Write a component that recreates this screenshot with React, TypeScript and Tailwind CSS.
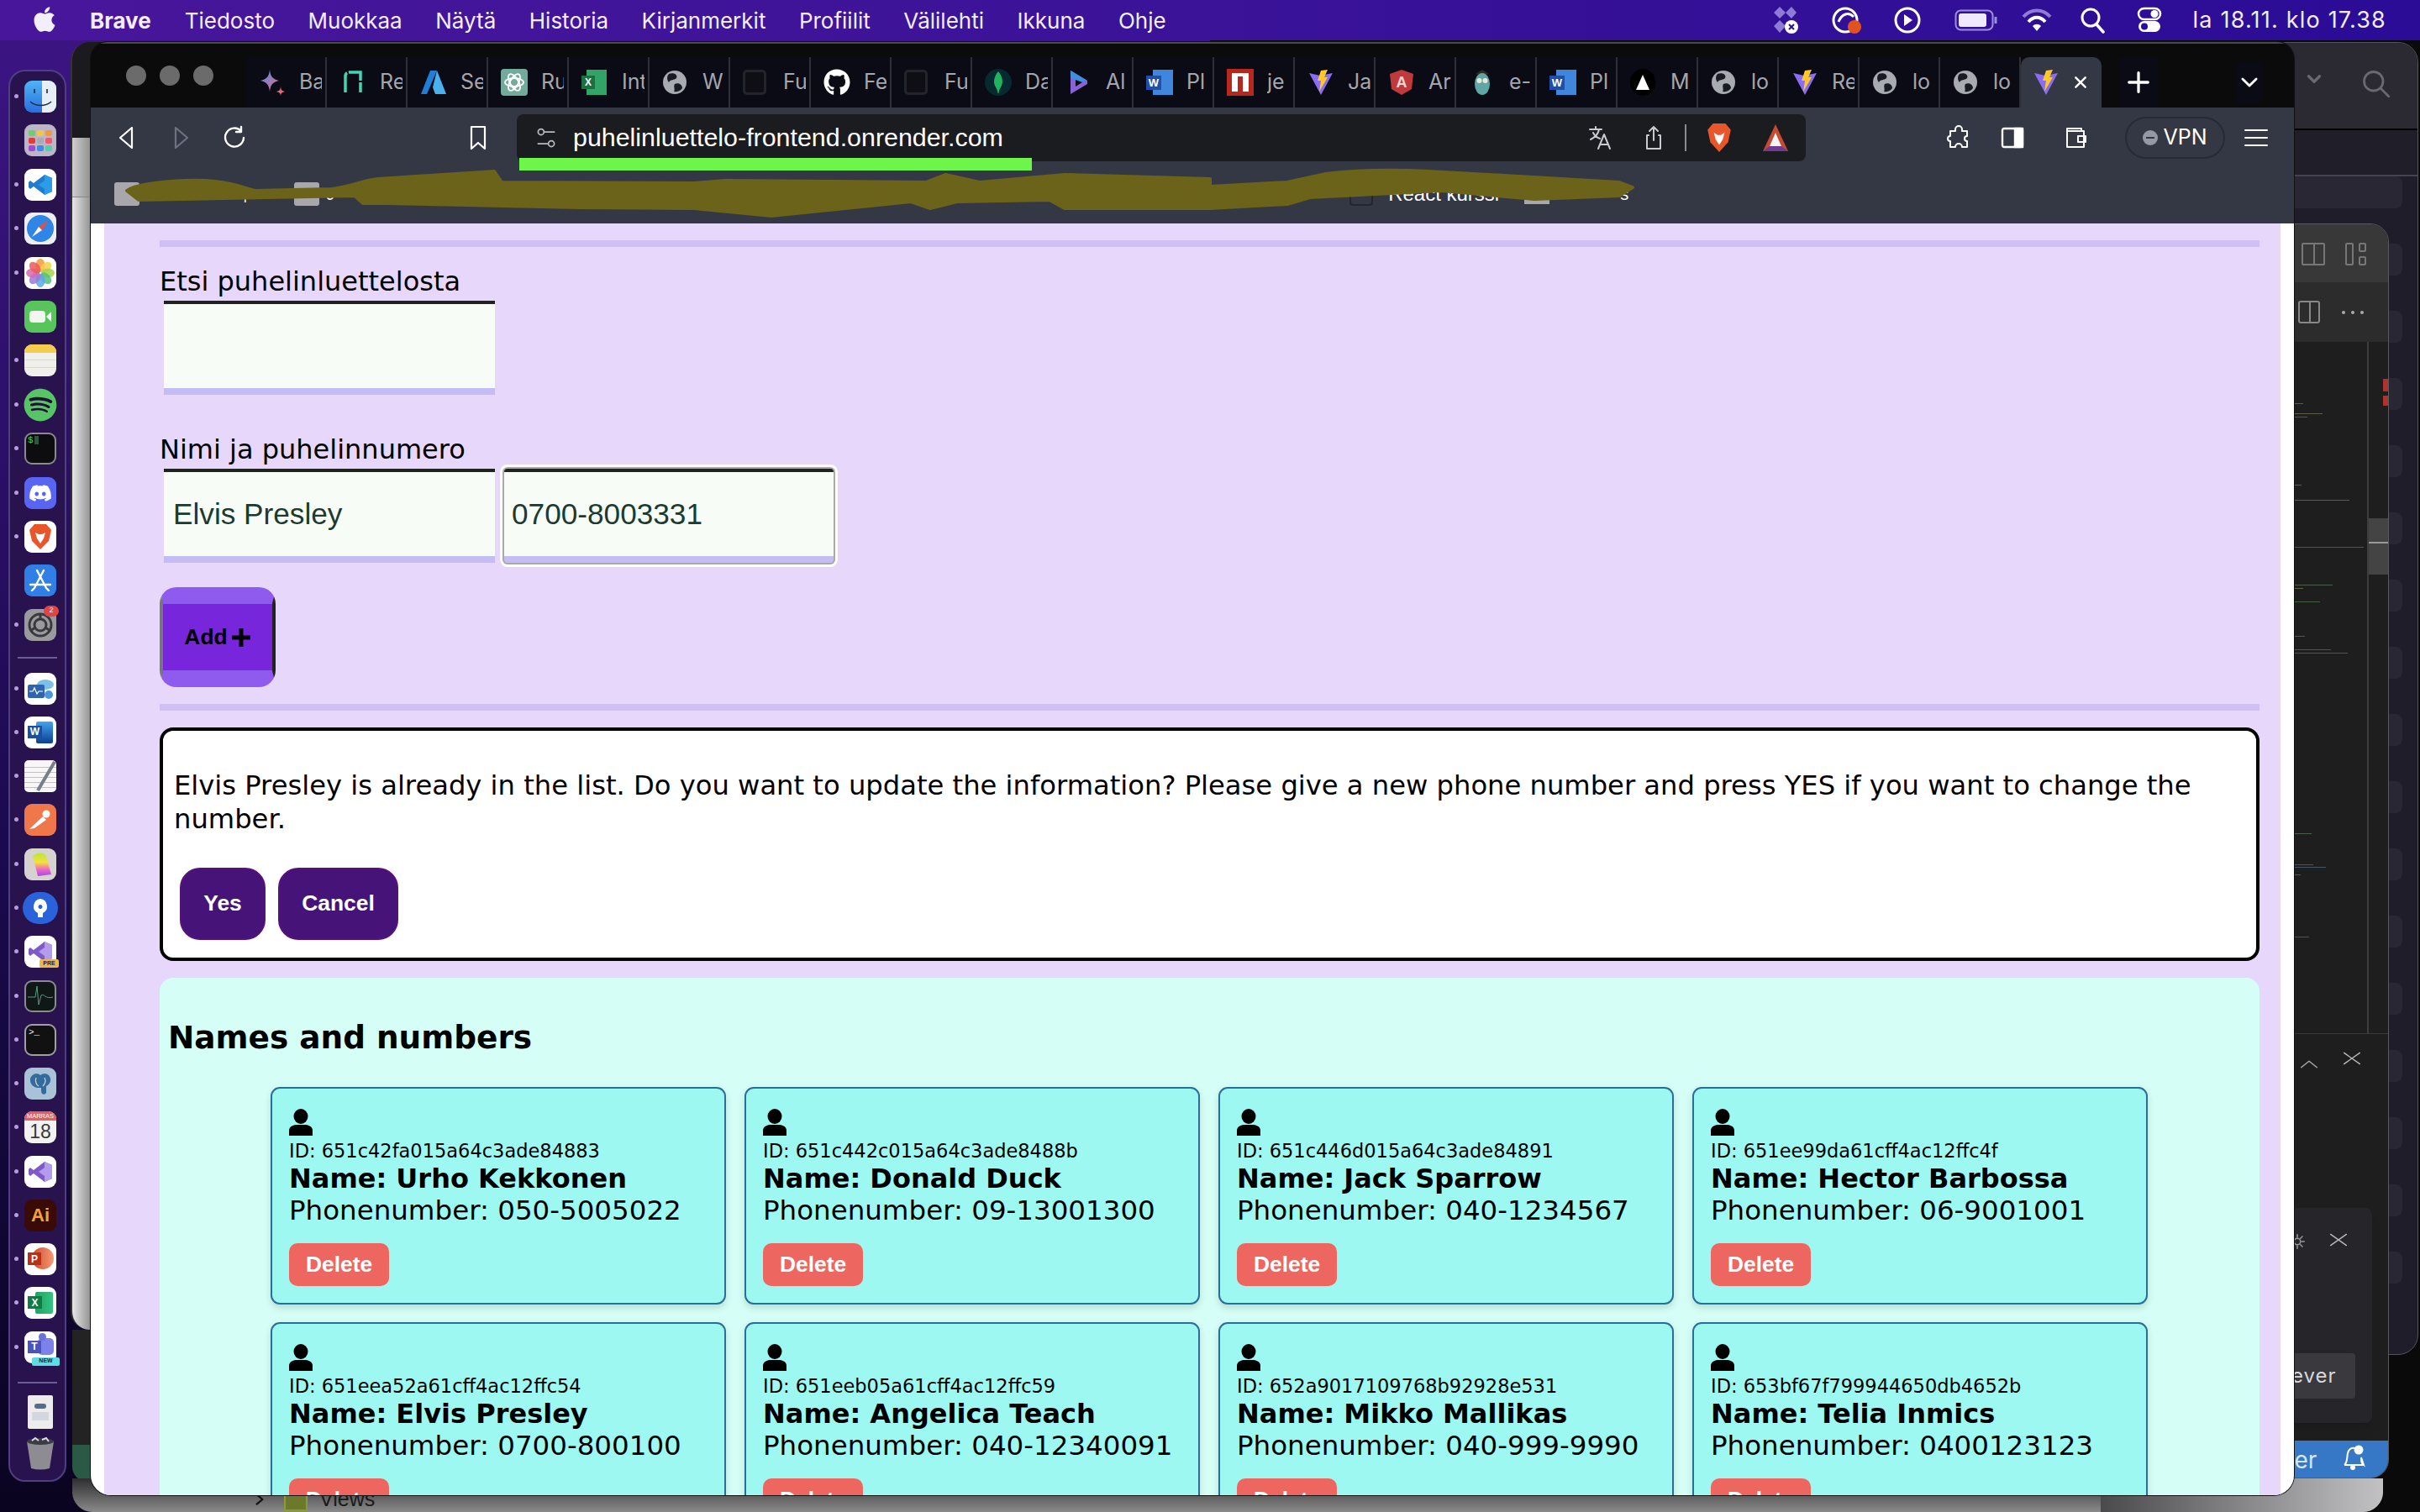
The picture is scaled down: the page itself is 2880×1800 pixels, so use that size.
import React from "react";
import { FaApple, FaGithub, FaDiscord, FaSpotify } from "react-icons/fa";

const VS = "font-['DejaVu_Sans',sans-serif]";
const AR = "font-['Liberation_Sans',Arial,sans-serif]";

function Vite({ s = 32 }: { s?: number }) {
  return (
    <svg width={s} height={s} viewBox="0 0 32 32">
      <path d="M2 5 L15 8 L30 5 L16 31 Z" fill="#8a6cf5" />
      <path d="M16 2 L24 1 L20 10 L24 10 L14 27 L16 14 L12 14 Z" fill="#ffc928" />
    </svg>
  );
}

function Globe({ s = 30 }: { s?: number }) {
  return (
    <svg width={s} height={s} viewBox="0 0 30 30">
      <circle cx="15" cy="15" r="14" fill="#a9abb2" />
      <path d="M8 5 C14 3 19 6 17 10 C14 13 10 11 8 15 C6 13 5 8 8 5 Z M15 17 C20 15 24 18 24 22 C21 26 17 27 14 26 C16 23 13 20 15 17 Z" fill="#1a1a22" />
    </svg>
  );
}

function TabIcon({ k }: { k: string }) {
  switch (k) {
    case "gem":
      return (
        <svg width="32" height="32" viewBox="0 0 32 32">
          <defs>
            <linearGradient id="g1" x1="0" y1="0" x2="1" y2="1">
              <stop offset="0" stopColor="#4c8df6" />
              <stop offset="1" stopColor="#e8697a" />
            </linearGradient>
          </defs>
          <path d="M13 1 C14 9 16 12 24 14 C16 16 14 19 13 27 C12 19 10 16 2 14 C10 12 12 9 13 1 Z" fill="url(#g1)" />
          <path d="M26 21 C26.5 25 27 26 31 27 C27 28 26.5 29 26 32 C25.5 29 25 28 21 27 C25 26 25.5 25 26 21 Z" fill="#e8697a" />
        </svg>
      );
    case "re":
      return (
        <svg width="32" height="32" viewBox="0 0 32 32">
          <path d="M7 28 V9 Q7 4 12 4 H25 V28" fill="none" stroke="#43d6b5" strokeWidth="3.5" strokeDasharray="24 2" />
        </svg>
      );
    case "az":
      return (
        <svg width="32" height="32" viewBox="0 0 32 32">
          <path d="M12 2 H20 L8 30 H1 Z" fill="#1f7fd6" />
          <path d="M20 2 L31 30 H18 L15 22 Z" fill="#49b2ee" />
        </svg>
      );
    case "gpt":
      return (
        <div className="w-[32px] h-[32px] rounded-[4px] bg-[#74aa9c] flex items-center justify-center">
          <svg width="26" height="26" viewBox="0 0 26 26" fill="none" stroke="#fff" strokeWidth="1.8">
            <circle cx="13" cy="13" r="5" />
            <ellipse cx="13" cy="13" rx="11" ry="5" />
            <ellipse cx="13" cy="13" rx="11" ry="5" transform="rotate(60 13 13)" />
            <ellipse cx="13" cy="13" rx="11" ry="5" transform="rotate(120 13 13)" />
          </svg>
        </div>
      );
    case "xl":
      return (
        <div className="relative w-[30px] h-[30px]">
          <div className="absolute right-0 top-0 w-[24px] h-[30px] bg-[#33a468]" />
          <div className={`absolute left-0 top-[7px] w-[16px] h-[16px] bg-[#1d6f42] text-white text-[12px] font-bold flex items-center justify-center ${AR}`}>X</div>
        </div>
      );
    case "gl":
      return <Globe />;
    case "dk":
      return <div className="w-[28px] h-[30px] rounded-[5px] border-[3px] border-[#24252a] bg-[#0e0e14]" />;
    case "gh":
      return <FaGithub size={32} color="#fff" />;
    case "mg":
      return (
        <div className="w-[32px] h-[32px] rounded-full bg-[#062a30] flex items-center justify-center">
          <svg width="14" height="28" viewBox="0 0 14 28">
            <path d="M7 1 C12 7 13 13 11 18 C10 20 8 22 7.5 27 H6.5 C6 22 4 20 3 18 C1 13 2 7 7 1 Z" fill="#22b45c" />
          </svg>
        </div>
      );
    case "al":
      return (
        <svg width="32" height="32" viewBox="0 0 32 32">
          <path d="M6 2 L26 14 L26 18 L6 30 Z" fill="#8a62d8" />
          <path d="M6 2 L26 14 L14 16 L6 10 Z" fill="#3f8fe0" />
          <path d="M12 13 L20 16 L12 21 Z" fill="#0b0c18" />
        </svg>
      );
    case "wd":
      return (
        <div className="relative w-[32px] h-[30px]">
          <div className="absolute right-0 top-0 w-[24px] h-[30px] bg-[#3f86dc]" />
          <div className={`absolute left-0 top-[7px] w-[18px] h-[17px] bg-[#1f4fa8] text-white text-[13px] font-bold flex items-center justify-center ${AR}`}>W</div>
        </div>
      );
    case "np":
      return (
        <div className="w-[32px] h-[32px] bg-[#b5271f] flex items-center justify-center">
          <div className="w-[20px] h-[22px] bg-white relative">
            <div className="absolute left-[7px] top-[4px] w-[6px] h-[18px] bg-[#b5271f]" />
          </div>
        </div>
      );
    case "vt":
      return <Vite />;
    case "ng":
      return (
        <svg width="32" height="32" viewBox="0 0 32 32">
          <path d="M16 1 L30 6 L28 24 L16 31 L4 24 L2 6 Z" fill="#c0393b" />
          <text x="16" y="22" textAnchor="middle" fontSize="18" fontFamily="Liberation Sans" fill="#f3d6d6" fontWeight="700">A</text>
        </svg>
      );
    case "ow":
      return (
        <svg width="32" height="32" viewBox="0 0 32 32">
          <path d="M8 6 L16 1 L24 6 L16 8 Z" fill="#332a22" />
          <ellipse cx="16" cy="18" rx="9" ry="13" fill="#5fa7a6" />
          <circle cx="12.5" cy="14" r="3" fill="#e8e8d8" />
          <circle cx="19.5" cy="14" r="3" fill="#e8e8d8" />
        </svg>
      );
    case "tr":
      return (
        <div className="w-[30px] h-[32px] rounded-full bg-black flex items-center justify-center">
          <svg width="18" height="20" viewBox="0 0 18 20"><path d="M9 1 L17 19 H1 Z" fill="#fff" /></svg>
        </div>
      );
    default:
      return null;
  }
}

const TABS: [string, string][] = [
  ["gem", "Ba"], ["re", "Re"], ["az", "Se"], ["gpt", "Ru"], ["xl", "Int"], ["gl", "W"],
  ["dk", "Fu"], ["gh", "Fe"], ["dk", "Fu"], ["mg", "Da"], ["al", "Al"], ["wd", "Pl"],
  ["np", "je"], ["vt", "Ja"], ["ng", "Ar"], ["ow", "e-"], ["wd", "Pl"], ["tr", "M"],
  ["gl", "lo"], ["vt", "Re"], ["gl", "lo"], ["gl", "lo"],
];

function Line({ d, w = 2.5, s = 32, c = "#fff" }: { d: string; w?: number; s?: number; c?: string }) {
  return (
    <svg width={s} height={s} viewBox="0 0 32 32" fill="none" stroke={c} strokeWidth={w} strokeLinecap="round" strokeLinejoin="round">
      <path d={d} />
    </svg>
  );
}

function Menubar() {
  const items = ["Tiedosto", "Muokkaa", "Näytä", "Historia", "Kirjanmerkit", "Profiilit", "Välilehti", "Ikkuna", "Ohje"];
  return (
    <div className="h-[48px] relative z-40 flex items-center pl-[36px] pr-[40px] bg-gradient-to-r from-[#48169a] to-[#2b0c96] text-[#f2eefc] font-['Inter',sans-serif] text-[26px]">
      <FaApple size={34} color="#f2eefc" className="mr-[37px] -mt-[3px]" />
      <span className="font-bold mr-[40px]">Brave</span>
      <div className="flex gap-[39.5px]">{items.map((m) => <span key={m}>{m}</span>)}</div>
      <div className="ml-auto flex items-center">
        <svg width="42" height="36" viewBox="0 0 42 36" className="mr-[32px]">
          <path d="M14 2 l7 7 l-7 7 l-7 -7 Z M28 2 l6 7 l-6 7 l-7 -7 Z M14 18 l7 7 l-7 8 l-7 -8 Z" fill="#8f7ad6" />
          <circle cx="28" cy="26" r="8" fill="#fff" />
          <path d="M25 23 l6 6 M31 23 l-6 6" stroke="#2b0c96" strokeWidth="2" />
        </svg>
        <svg width="42" height="36" viewBox="0 0 42 36" className="mr-[32px]">
          <circle cx="18" cy="18" r="14" fill="none" stroke="#fff" strokeWidth="3" />
          <path d="M10 20 C14 10 22 8 28 14" fill="none" stroke="#fff" strokeWidth="3" />
          <circle cx="29" cy="26" r="8" fill="#e2521f" />
        </svg>
        <svg width="36" height="36" viewBox="0 0 36 36" className="mr-[38px]">
          <circle cx="18" cy="18" r="14" fill="none" stroke="#fff" strokeWidth="3" />
          <path d="M14 11 L24 18 L14 25 Z" fill="#fff" />
        </svg>
        <svg width="52" height="26" viewBox="0 0 52 26" className="mr-[28px]">
          <rect x="1.5" y="1.5" width="44" height="23" rx="6" fill="none" stroke="#9b8fd8" strokeWidth="2" />
          <rect x="5" y="5" width="33" height="16" rx="3" fill="#eee9fb" />
          <path d="M49 9 v8" stroke="#9b8fd8" strokeWidth="3" />
        </svg>
        <svg width="36" height="30" viewBox="0 0 36 30" className="mr-[34px]">
          <path d="M2 11 C11 1 25 1 34 11" fill="none" stroke="#8f7ad6" strokeWidth="4" />
          <path d="M8 17 C14 10 22 10 28 17" fill="none" stroke="#fff" strokeWidth="4" />
          <path d="M13 22 C16 19 20 19 23 22 L18 28 Z" fill="#fff" />
        </svg>
        <svg width="30" height="32" viewBox="0 0 30 32" className="mr-[36px]">
          <circle cx="12" cy="13" r="10" fill="none" stroke="#fff" strokeWidth="3" />
          <path d="M19 21 L27 30" stroke="#fff" strokeWidth="3.5" strokeLinecap="round" />
        </svg>
        <svg width="32" height="32" viewBox="0 0 32 32" className="mr-[36px]">
          <rect x="3" y="2" width="26" height="13" rx="6.5" fill="none" stroke="#fff" strokeWidth="2.5" />
          <circle cx="22" cy="8.5" r="4.5" fill="#fff" />
          <rect x="3" y="17" width="26" height="13" rx="6.5" fill="#fff" />
          <circle cx="10" cy="23.5" r="4" fill="#2b0c96" />
        </svg>
        <span className="text-[27px] tracking-[1.2px] whitespace-nowrap">la 18.11. klo 17.38</span>
      </div>
    </div>
  );
}

function Box({ c, children, cls = "" }: { c: string; children?: React.ReactNode; cls?: string }) {
  return (
    <div className={`w-[38px] h-[38px] rounded-[9px] flex items-center justify-center overflow-hidden relative ${cls}`} style={{ background: c }}>
      {children}
    </div>
  );
}

function VSShape({ a = "#7f5ac7", b = "#b49cec" }: { a?: string; b?: string }) {
  return (
    <svg width="30" height="26" viewBox="0 0 30 26">
      <path d="M20 1 L29 5 V21 L20 25 L7 15 L3 18 L1 16 V10 L3 8 L7 11 Z" fill={a} />
      <path d="M20 1 L29 5 V21 L20 25 Z M20 8 L13 13 L20 18 Z" fill={b} fillRule="evenodd" />
    </svg>
  );
}

function DockIcon({ k }: { k: string }) {
  switch (k) {
    case "finder":
      return (
        <div className="w-[38px] h-[38px] rounded-[9px] overflow-hidden relative bg-gradient-to-b from-[#4fb4f5] to-[#2a6fdc]">
          <div className="absolute right-0 top-0 w-[17px] h-full bg-[#e8eef5]" />
          <svg className="absolute inset-0" width="38" height="38" viewBox="0 0 38 38" fill="none" stroke="#14284a" strokeWidth="1.6">
            <path d="M12 10 v5 M27 10 v5 M7 25 C14 31 25 31 32 25" />
          </svg>
        </div>
      );
    case "launch":
      return (
        <Box c="#bdb5c8">
          <div className="grid grid-cols-3 gap-[2px]">
            {["#6bd06a", "#f6c544", "#f09a3a", "#e33a3a", "#a9a9b4", "#ef5a6a", "#a24ad8", "#3a8cf0", "#4ed0a8"].map((c, i) => (
              <div key={i} className="w-[8px] h-[7px] rounded-[2px]" style={{ background: c }} />
            ))}
          </div>
        </Box>
      );
    case "vscode":
      return <Box c="#fff"><VSShape a="#1f7ccf" b="#2a9de8" /></Box>;
    case "safari":
      return (
        <Box c="#eceef2">
          <svg width="34" height="34" viewBox="0 0 34 34">
            <circle cx="17" cy="17" r="16" fill="#2f86e6" />
            <path d="M27 7 L19 19 L15 15 Z" fill="#f04a3a" />
            <path d="M7 27 L15 15 L19 19 Z" fill="#fff" />
          </svg>
        </Box>
      );
    case "photos":
      return (
        <Box c="#fff">
          <svg width="34" height="34" viewBox="0 0 34 34">
            {["#f29a38", "#f6d14a", "#a6d24e", "#57bf7c", "#5aa8e4", "#9a7ad8", "#d668b4", "#ec5a58"].map((c, i) => (
              <ellipse key={i} cx="17" cy="8" rx="5.5" ry="8" fill={c} opacity=".85" transform={`rotate(${i * 45} 17 17)`} />
            ))}
          </svg>
        </Box>
      );
    case "facetime":
      return (
        <Box c="#58c45c">
          <div className="w-[19px] h-[14px] rounded-[4px] bg-[#f2f5f0]" />
          <svg width="8" height="12" viewBox="0 0 8 12"><path d="M7 0 V12 L1 6 Z" fill="#f2f5f0" /></svg>
        </Box>
      );
    case "notes":
      return (
        <div className="w-[38px] h-[38px] rounded-[9px] overflow-hidden bg-[#f0efea] flex flex-col">
          <div className="h-[10px] bg-[#f6cc4c]" />
          <div className="mt-[8px] border-t border-[#d8d8d4] h-[9px]" />
          <div className="border-t border-[#d8d8d4] h-[9px]" />
        </div>
      );
    case "spotify":
      return <div className="w-[40px] h-[38px] rounded-full bg-[#1f1032] flex items-center justify-center"><FaSpotify size={40} color="#58c468" /></div>;
    case "term1":
      return (
        <div className="w-[38px] h-[38px] rounded-[9px] border-2 border-[#8a8a90] bg-[#0d0d10] text-[#4ad06a] text-[11px] leading-none p-[2px] font-['Liberation_Mono',monospace] flex items-start">$<span className="inline-block w-[5px] h-[10px] bg-[#2a5a3a] ml-[1px]" /></div>
      );
    case "discord":
      return <Box c="#5865f2"><FaDiscord size={28} color="#fff" /></Box>;
    case "brave":
      return (
        <Box c="#fff">
          <svg width="30" height="34" viewBox="0 0 30 34">
            <path d="M8 2 H22 L28 9 L25 22 L15 32 L5 22 L2 9 Z" fill="#e8562a" />
            <path d="M9 12 L13 14 H17 L21 12 L19 19 L15 25 L11 19 Z" fill="#fff" />
          </svg>
        </Box>
      );
    case "appstore":
      return (
        <Box c="#2f7fe6">
          <svg width="30" height="30" viewBox="0 0 30 30" stroke="#fff" strokeWidth="2.4" strokeLinecap="round" fill="none">
            <path d="M19 3 L8 24 M11 3 L22 24 M3 20 H27 M5 27 L8 24 M25 27 L22 24" />
          </svg>
        </Box>
      );
    case "settings":
      return (
        <div className="relative">
          <Box c="#9a9a9e">
            <svg width="30" height="30" viewBox="0 0 30 30" fill="none" stroke="#3a3a3e">
              <circle cx="15" cy="15" r="13" strokeWidth="3" />
              <circle cx="15" cy="15" r="7" strokeWidth="3" />
              <path d="M15 8 V1 M9 18 L3 22 M21 18 L27 22" strokeWidth="3" />
            </svg>
          </Box>
          <div className={`absolute -right-[3px] -top-[4px] w-[18px] h-[13px] rounded-full bg-[#e04444] text-white text-[9px] flex items-center justify-center ${AR}`}>2</div>
        </div>
      );
    case "azdata":
      return (
        <Box c="#fff">
          <svg width="34" height="30" viewBox="0 0 34 30">
            <ellipse cx="23" cy="10" rx="10" ry="6" fill="#7cc0ea" />
            <rect x="2" y="10" width="20" height="16" rx="2" fill="#2f65b0" />
            <path d="M4 18 h4 l2 -4 l3 7 l2 -3 h5" stroke="#fff" strokeWidth="1.2" fill="none" />
            <circle cx="27" cy="22" r="5" fill="#4a98d8" />
          </svg>
        </Box>
      );
    case "word":
      return (
        <Box c="#fff">
          <div className="absolute right-[4px] top-[6px] w-[20px] h-[26px] rounded-[2px] bg-gradient-to-b from-[#41a5ee] to-[#103f91]" />
          <div className={`absolute left-[4px] top-[11px] w-[17px] h-[15px] bg-[#1a4fa5] text-white text-[12px] font-bold flex items-center justify-center ${AR}`}>W</div>
        </Box>
      );
    case "textedit":
      return (
        <div className="w-[38px] h-[38px] rounded-[5px] bg-[#f8f6f6] relative overflow-hidden">
          {[8, 14, 20, 26, 32].map((y) => <div key={y} className="absolute left-0 right-0 h-px bg-[#e4b4b4]" style={{ top: y }} />)}
          <svg className="absolute inset-0" width="38" height="38" viewBox="0 0 38 38"><path d="M36 2 L16 36" stroke="#77808a" strokeWidth="4" /></svg>
        </div>
      );
    case "postman":
      return (
        <Box c="#f0774a">
          <svg width="30" height="26" viewBox="0 0 30 26" fill="#fff">
            <circle cx="22" cy="6" r="4.5" />
            <path d="M2 24 L18 9 L22 13 L8 23 Z" />
          </svg>
        </Box>
      );
    case "paint":
      return (
        <Box c="#d6d2d0">
          <svg width="30" height="32" viewBox="0 0 30 32">
            <defs>
              <linearGradient id="pp" x1="0" y1="0" x2="0" y2="1">
                <stop offset="0" stopColor="#b6e63c" />
                <stop offset=".4" stopColor="#f6e03c" />
                <stop offset=".7" stopColor="#f06ac0" />
                <stop offset="1" stopColor="#a04ae8" />
              </linearGradient>
            </defs>
            <path d="M6 6 C12 1 20 2 22 6 L28 28 L12 30 Z" fill="url(#pp)" />
          </svg>
        </Box>
      );
    case "source":
      return (
        <div className="w-[42px] h-[38px] rounded-full bg-[#2a62dc] flex items-center justify-center">
          <svg width="20" height="24" viewBox="0 0 20 24"><path d="M10 1 A9 9 0 0 1 13 18 V23 H7 V18 A9 9 0 0 1 10 1 Z M10 8 a2.5 2.5 0 1 0 .01 0" fill="#fff" fillRule="evenodd" /></svg>
        </div>
      );
    case "vspre":
      return (
        <div className="relative">
          <Box c="#fff"><VSShape /></Box>
          <div className={`absolute -right-[3px] bottom-0 w-[23px] h-[10px] rounded-[2px] bg-[#eab94a] text-[#2a1a3a] text-[7px] font-bold flex items-center justify-center ${AR}`}>PRE</div>
        </div>
      );
    case "activity":
      return (
        <div className="w-[38px] h-[38px] rounded-[9px] border-2 border-[#8a8a90] bg-[#0f1816] flex items-center justify-center">
          <svg width="32" height="28" viewBox="0 0 32 28" fill="none" stroke="#5f9a80" strokeWidth="1"><path d="M1 15 H10 L12 2 L14 24 L17 13 C20 10 22 18 31 15" /></svg>
        </div>
      );
    case "term2":
      return (
        <div className="w-[38px] h-[38px] rounded-[9px] border-2 border-[#a0a0a4] bg-[#111] text-[#e8e8e8] text-[11px] leading-none p-[3px] font-['Liberation_Mono',monospace]">&gt;_</div>
      );
    case "pg":
      return (
        <Box c="#a9c2d8">
          <svg width="30" height="30" viewBox="0 0 30 30">
            <path d="M3 9 C5 3 12 2 15 5 C19 2 26 3 27 9 C28 14 24 17 22 18 V26 C20 29 16 28 16 24 V20 H12 C8 20 2 16 3 9 Z" fill="#346a9c" />
            <path d="M10 8 C8 13 11 17 13 18 M20 8 C22 12 20 16 18 18" stroke="#c8dae8" strokeWidth="1.2" fill="none" />
          </svg>
        </Box>
      );
    case "cal":
      return (
        <div className={`w-[38px] h-[38px] rounded-[9px] overflow-hidden bg-[#f4f2f0] flex flex-col items-center ${AR}`}>
          <div className="w-full h-[11px] bg-[#e06060] text-white text-[7.5px] leading-[11px] text-center">MARRAS</div>
          <div className="text-[23px] leading-[27px] text-[#3a3a3a]">18</div>
        </div>
      );
    case "vs":
      return <Box c="#fff"><VSShape /></Box>;
    case "ai":
      return <Box c="#3a0a06"><span className={`text-[#f6a23a] font-bold text-[22px] ${AR}`}>Ai</span></Box>;
    case "ppt":
      return (
        <Box c="#fff">
          <div className="absolute right-[3px] top-[5px] w-[26px] h-[26px] rounded-full bg-gradient-to-r from-[#d0452a] to-[#f39a74]" />
          <div className={`absolute left-[4px] top-[11px] w-[16px] h-[15px] bg-[#b7301a] text-white text-[12px] font-bold flex items-center justify-center ${AR}`}>P</div>
        </Box>
      );
    case "excel":
      return (
        <Box c="#fff">
          <div className="absolute right-[4px] top-[6px] w-[21px] h-[26px] rounded-[2px] bg-gradient-to-r from-[#21a366] to-[#33c481]" />
          <div className={`absolute left-[4px] top-[11px] w-[17px] h-[15px] bg-[#107c41] text-white text-[12px] font-bold flex items-center justify-center ${AR}`}>X</div>
        </Box>
      );
    case "teams":
      return (
        <div className="relative">
          <Box c="#fff">
            <div className="absolute right-[3px] top-[8px] w-[19px] h-[20px] rounded-[5px] bg-[#7b83eb]" />
            <div className="absolute right-[12px] top-[2px] w-[9px] h-[9px] rounded-full bg-[#6a72d8]" />
            <div className={`absolute left-[4px] top-[11px] w-[16px] h-[15px] bg-[#4b53bc] text-white text-[12px] font-bold flex items-center justify-center ${AR}`}>T</div>
          </Box>
          <div className={`absolute -right-[4px] -bottom-[3px] w-[33px] h-[10px] rounded-[2px] bg-[#5fdce4] text-[#26263a] text-[7px] font-bold flex items-center justify-center ${AR}`}>NEW</div>
        </div>
      );
    default:
      return null;
  }
}

function Dock() {
  const first: [string, boolean][] = [
    ["finder", true], ["launch", false], ["vscode", true], ["safari", true], ["photos", true], ["facetime", false],
    ["notes", true], ["spotify", true], ["term1", true], ["discord", true], ["brave", true], ["appstore", false], ["settings", true],
  ];
  const second = ["azdata", "word", "textedit", "postman", "paint", "source", "vspre", "activity", "term2", "pg", "cal", "vs", "ai", "ppt", "excel", "teams"];
  const Item = ({ k, dot }: { k: string; dot: boolean }) => (
    <div className="relative h-[38px] w-full flex justify-center pl-[7px]">
      {dot && <div className="absolute left-[5px] top-[16px] w-[5px] h-[5px] rounded-full bg-[#b79be0]" />}
      <DockIcon k={k} />
    </div>
  );
  return (
    <div className="absolute left-[10px] top-[83px] w-[69px] h-[1681px] rounded-[20px] border-2 border-[#4d3f80] bg-[#28134f] pt-[11px] flex flex-col z-30">
      <div className="flex flex-col gap-[14.4px]">
        {first.map(([k, d]) => <Item key={k} k={k} dot={d} />)}
      </div>
      <div className="mt-[19px] mx-[9px] h-[2px] bg-[#6a5c94] shrink-0" />
      <div className="mt-[17px] flex flex-col gap-[14.27px]">
        {second.map((k) => <Item key={k} k={k} dot={true} />)}
      </div>
      <div className="mt-[22px] mx-[9px] h-[2px] bg-[#6a5c94] shrink-0" />
      <div className="mt-[14px] flex justify-center pl-[7px]">
        <div className="w-[30px] h-[40px] bg-[#ececec] rounded-[2px] flex flex-col items-center justify-center">
          <div className="w-[14px] h-[6px] rounded-full bg-[#5a6a8a]" />
          <div className="w-[20px] h-[10px] mt-[4px] bg-[#d4d8de]" />
        </div>
      </div>
      <div className="mt-[9px] flex justify-center pl-[7px]">
        <svg width="36" height="40" viewBox="0 0 36 40">
          <path d="M2 6 H34 L29 38 Q18 41 7 38 Z" fill="#8c8c92" />
          <ellipse cx="18" cy="6" rx="16" ry="4" fill="#3c3c44" />
          <path d="M8 5 l4 -3 l4 3 M20 4 l5 -2 l3 4" stroke="#ddd" strokeWidth="2" fill="none" />
        </svg>
      </div>
    </div>
  );
}

function BackWindows() {
  const code: [number, number, string][] = [
    [479, 2740, "#7a8a7a"], [491, 2763, "#8a8a60"], [495, 2745, "#7a7a7a"], [576, 2738, "#7a8a7a"], [594, 2795, "#9a7a60"],
    [650, 2812, "#9a6a50"], [695, 2775, "#6a8a70"], [699, 2740, "#8a8a60"], [715, 2760, "#5a8a5a"], [756, 2742, "#7a7a7a"],
    [772, 2773, "#5a7aa0"], [776, 2793, "#5a7aa0"], [991, 2750, "#6a8a70"], [1028, 2752, "#5a7aa0"], [1031, 2767, "#5a7aa0"], [1040, 2737, "#7a7a7a"], [1114, 2747, "#5a7aa0"],
  ];
  return (
    <>
      {/* left window, behind the browser */}
      <div className="absolute left-[84px] top-[50px] w-[300px] h-[1533px] rounded-[22px] overflow-hidden flex flex-col border-l-2 border-[#333]">
        <div className="h-[114px] bg-[#1b1b1f]" />
        <div className="h-[71px] bg-gradient-to-r from-[#cfcfcf] to-[#8a8a8a] w-[24px] border-b border-[#888]" />
        <div className="flex-1 bg-gradient-to-r from-[#e8e8e8] to-[#8a8a8a] w-[24px]" />
      </div>
      <div className="absolute left-[86px] top-[1583px] w-[200px] h-[137px] bg-[#232323]" />
      <div className="absolute left-[86px] top-[1720px] w-[200px] h-[44px] rounded-b-[18px] bg-[#2a5a45]" />
      {/* grey window under the browser */}
      <div className="absolute left-[86px] top-[1760px] w-[2750px] h-[40px] rounded-b-[24px] bg-[linear-gradient(to_bottom,#2e2e30,#8a8a8a)]" />
      <div className="absolute left-[2500px] top-[1760px] w-[336px] h-[40px] rounded-br-[24px] bg-[linear-gradient(to_right,#4a4a4c,#c2c2c4)]" />
      <div className={`absolute left-[300px] top-[1766px] flex items-center text-[#1a1a1a] text-[25px] ${AR}`}>
        <Line d="M10 6 L22 16 L10 26" s={18} c="#111" w={4} />
        <div className="ml-[20px] w-[28px] h-[28px] bg-[#6b7a2a] border-2 border-[#8a9a3a]" />
        <span className="ml-[14px]">Views</span>
      </div>
      {/* far right window */}
      <div className="absolute left-[2600px] top-[50px] w-[278px] h-[1563px] rounded-[24px] overflow-hidden border border-[#55535c] bg-[#1f1d2a] flex flex-col">
        <div className="h-[104px] bg-[#2b2932] border-b-2 border-black relative">
          <div className="absolute left-[140px] top-[30px]"><Line d="M8 12 L16 20 L24 12" s={26} c="#6a6870" w={4} /></div>
          <div className="absolute left-[208px] top-[30px]"><Line d="M14 14 m-10 0 a10 10 0 1 0 20 0 a10 10 0 1 0 -20 0 M22 22 L30 30" s={36} c="#6a6870" w={2.5} /></div>
        </div>
        <div className="h-[55px] bg-[#201e28] border-b-2 border-[#45434c]" />
        <div className="flex-1 flex flex-col items-end pr-[18px] gap-[42px] pt-[0px]">
          {Array.from({ length: 17 }).map((_, i) => <div key={i} className="w-[200px] h-[38px] rounded-[8px] bg-[#292733] shrink-0" />)}
        </div>
      </div>
      {/* VS Code window */}
      <div className="absolute left-[2600px] top-[266px] w-[243px] h-[1494px] rounded-[22px] overflow-hidden border border-[#5a5a5a] bg-[#1e1e1e] flex flex-col">
        <div className="h-[69px] bg-[#383838] shrink-0 relative">
          <div className="absolute left-[138px] top-[22px] w-[28px] h-[27px] border-2 border-[#777] rounded-[2px] flex"><div className="w-[14px] border-r-2 border-[#777]" /></div>
          <div className="absolute left-[190px] top-[22px] w-[10px] h-[27px] border-2 border-[#777] rounded-[2px]" />
          <div className="absolute left-[206px] top-[22px] w-[9px] h-[11px] border-2 border-[#777] rounded-[2px]" />
          <div className="absolute left-[206px] top-[38px] w-[9px] h-[11px] border-2 border-[#777] rounded-[2px]" />
        </div>
        <div className="h-[71px] bg-[#2c2c2c] shrink-0 relative">
          <div className="absolute left-[134px] top-[22px] w-[26px] h-[27px] border-2 border-[#888] rounded-[3px] flex"><div className="w-[13px] border-r-2 border-[#888]" /></div>
          <div className="absolute left-[186px] top-[34px] flex gap-[7px]">
            <div className="w-[4px] h-[4px] bg-[#aaa] rounded-full" />
            <div className="w-[4px] h-[4px] bg-[#aaa] rounded-full" />
            <div className="w-[4px] h-[4px] bg-[#aaa] rounded-full" />
          </div>
        </div>
        <div className="h-[823px] shrink-0 relative bg-[#1e1e1e]">
          {code.map(([y, x2, c], i) => (
            <div key={i} className="absolute left-[130px] h-[1px] opacity-60" style={{ top: y - 406, width: x2 - 2730, background: c }} />
          ))}
          <div className="absolute left-[216px] top-0 bottom-0 w-[2px] bg-[#3c3c3c]" />
          <div className="absolute left-[218px] right-0 top-[210px] h-[67px] bg-[#444]" />
          <div className="absolute left-[218px] right-0 top-[238px] h-[2px] bg-[#9a9a9a]" />
          <div className="absolute left-[235px] right-0 top-[44px] h-[15px] bg-[#b0322c]" />
          <div className="absolute left-[235px] right-0 top-[64px] h-[12px] bg-[#b0322c]" />
        </div>
        <div className="flex-1 border-t border-[#3a3a3a] relative">
          <div className="absolute left-[132px] top-[21px]"><Line d="M6 20 L16 12 L26 20" s={30} c="#aaa" w={1.5} /></div>
          <div className="absolute left-[183px] top-[14px]"><Line d="M6 9 L26 23 M26 9 L6 23" s={30} c="#bbb" w={1.5} /></div>
          <div className="absolute left-[0px] top-[207px] w-[222px] h-[256px] rounded-[8px] bg-[#26262a] shadow-lg">
            <div className="absolute left-[167px] top-[23px]"><Line d="M6 9 L26 23 M26 9 L6 23" s={30} c="#bbb" w={1.5} /></div>
            <div className="absolute left-[121px] top-[28px]"><Line d="M16 16 m-5 0 a5 5 0 1 0 10 0 a5 5 0 1 0 -10 0 M16 5 v4 M16 23 v4 M5 16 h4 M23 16 h4 M8 8 l3 3 M21 21 l3 3 M24 8 l-3 3 M11 21 l-3 3" s={24} c="#999" w={2} /></div>
            <div className="absolute left-[100px] top-[173px] w-[102px] h-[54px] rounded-[4px] bg-[#3a3a3e] flex items-center text-[#d8d8d8] text-[24px] tracking-[1px] pl-[26px] font-['Inter',sans-serif]">ever</div>
          </div>
        </div>
        <div className="h-[44px] bg-[#3678c6] shrink-0 relative text-[#d8e4f2] text-[28px] font-['Inter',sans-serif]">
          <span className="absolute left-[113px] top-[2px]">ner</span>
          <div className="absolute left-[186px] top-[4px]">
            <svg width="28" height="34" viewBox="0 0 28 34" fill="none" stroke="#fff" strokeWidth="2">
              <path d="M3 25 C7 22 6 15 7 11 C8 6 12 4 15 5 M23 16 C23 20 23 23 26 25 Z M3 25 H26" />
              <circle cx="13" cy="28" r="3" fill="#fff" stroke="none" />
              <circle cx="20" cy="7" r="5.5" fill="#fff" stroke="none" />
            </svg>
          </div>
        </div>
      </div>
    </>
  );
}

function BrowserChrome() {
  return (
    <>
      {/* tab strip */}
      <div className="h-[78px] bg-[#0b0b0c] flex shrink-0 shadow-[inset_0_2px_0_#4a4a4a]">
        <div className="w-[185px] pl-[42px] pt-[28px] flex gap-[16px] shrink-0">
          <div className="w-[24px] h-[24px] rounded-full bg-[#6b6b6b]" />
          <div className="w-[24px] h-[24px] rounded-full bg-[#6b6b6b]" />
          <div className="w-[24px] h-[24px] rounded-full bg-[#6b6b6b]" />
        </div>
        <div className="mt-[18px] h-[60px] flex bg-[#0b0b16]">
          {TABS.map(([k, t], i) => (
            <div key={i} className={`w-[96px] h-[60px] border-r-2 border-[#2d2e36] pl-[15px] flex items-center overflow-hidden`}>
              <div className="w-[48px] shrink-0 flex"><TabIcon k={k} /></div>
              <span className="w-[27px] overflow-hidden whitespace-nowrap text-[25px] text-[#a4a6ae] font-['Inter',sans-serif]">{t}</span>
            </div>
          ))}
        </div>
        <div className="mt-[18px] h-[60px] w-[96px] rounded-t-[10px] bg-[#343844] flex items-center pl-[14px] gap-[12px] shrink-0">
          <Vite />
          <Line d="M9 9 L23 23 M23 9 L9 23" s={26} w={3} />
        </div>
        <div className="mt-[18px] h-[60px] w-[44px] ml-[22px] bg-[#0b0b16] flex items-center justify-center shrink-0">
          <Line d="M16 4 V28 M4 16 H28" s={30} w={3.5} />
        </div>
        <div className="mt-[24px] h-[48px] w-[30px] ml-[95px] bg-[#0b0b16] flex items-center justify-center shrink-0">
          <Line d="M6 11 L16 21 L26 11" s={26} w={3.5} />
        </div>
      </div>
      {/* address row */}
      <div className="h-[138px] bg-[#343844] shrink-0 flex flex-col relative">
        <div className="h-[72px] flex items-center pl-[11px]">
          <div className="w-[64px] flex justify-center"><Line d="M22 4 L8 16 L22 28 Z" w={2.2} /></div>
          <div className="w-[64px] flex justify-center"><Line d="M10 4 L24 16 L10 28 Z" w={2.2} c="#6d7180" /></div>
          <div className="w-[64px] flex justify-center"><Line d="M24 8 A11 11 0 1 0 27 16 M24 3 V9 H18" w={2.4} /></div>
          <div className="w-[32px] ml-[242px] flex justify-center"><Line d="M8 3 H24 V29 L16 22 L8 29 Z" w={2.2} /></div>
          <div className="ml-[30px] relative w-[1534px] h-[56px] rounded-[8px] bg-[#1b1c20] flex items-center">
            <div className="ml-[21px] w-[28px] flex justify-center">
              <Line d="M13 8 H27 M5 24 H19 M5 8 a4 4 0 1 0 8 0 a4 4 0 1 0 -8 0 M19 24 a4 4 0 1 0 8 0 a4 4 0 1 0 -8 0" s={28} c="#b8bac0" w={2} />
            </div>
            <span className={`ml-[18px] text-[30.4px] text-white whitespace-nowrap ${AR}`}>puhelinluettelo-frontend.onrender.com</span>
            <div className="ml-auto flex items-center pr-[16px]">
              <div className="w-[64px] flex justify-center"><Line d="M4 6 H18 M11 3 V6 M15 6 C14 12 9 16 5 18 M8 10 C10 14 13 16 16 17 M14 29 L21 12 L28 29 M16 24 H26" s={32} c="#c8cad0" w={2} /></div>
              <div className="w-[64px] flex justify-center"><Line d="M16 3 V19 M11 8 L16 3 L21 8 M10 13 H8 V29 H24 V13 H22" s={32} c="#c8cad0" w={2} /></div>
              <div className="ml-[5px] w-[2px] h-[32px] bg-[#8a8c92]" />
              <div className="ml-[19px] w-[40px] flex justify-center">
                <svg width="32" height="36" viewBox="0 0 30 34">
                  <path d="M8 1 H22 L28 8 L25 22 L15 33 L5 22 L2 8 Z" fill="#e8562a" />
                  <path d="M9 11 L13 14 H17 L21 11 L19 19 L15 25 L11 19 Z" fill="#fff" />
                </svg>
              </div>
              <div className="ml-[27px] w-[40px] flex justify-center">
                <svg width="34" height="34" viewBox="0 0 34 34">
                  <path d="M17 1 L32 33 H2 Z" fill="#c74a32" />
                  <path d="M2 33 L10 27 H24 L32 33 Z" fill="#6d3a94" />
                  <path d="M17 11 L24 27 H10 Z" fill="#f5f5f5" />
                </svg>
              </div>
            </div>
            <div className="absolute left-[3px] top-[52px] w-[610px] h-[15px] bg-[#6ef54a]" />
          </div>
          <div className="ml-[150px] w-[64px] flex justify-center"><Line d="M12 6 a4 4 0 0 1 8 0 V8 H26 V14 a3 3 0 0 0 0 6 V27 H20 a4 4 0 0 0 -8 0 H6 V20 a3 3 0 0 1 0 -6 V8 H12 Z" w={2} /></div>
          <div className="w-[64px] flex justify-center"><svg width="28" height="28" viewBox="0 0 28 28" fill="none" stroke="#fff" strokeWidth="2.4"><rect x="2" y="3" width="24" height="22" rx="2" /><rect x="17" y="3" width="9" height="22" fill="#fff" /></svg></div>
          <div className="ml-[12px] w-[64px] flex justify-center"><Line d="M5 8 H25 V27 H5 Z M5 8 V5 H22 V8 M18 14 H27 V21 H18 Z" w={2} /></div>
          <div className="ml-[26px] w-[119px] h-[50px] rounded-full border-2 border-[#262a33] flex items-center justify-center gap-[6px] text-[25px] text-white font-['Inter',sans-serif]">
            <div className="w-[18px] h-[18px] rounded-full bg-[#9599a6] flex items-center justify-center"><div className="w-[10px] h-[2px] bg-[#343844]" /></div>
            <span>VPN</span>
          </div>
          <div className="ml-[21px] w-[32px] flex justify-center"><Line d="M3 7 H29 M3 16 H29 M3 25 H29" w={2} /></div>
        </div>
        {/* bookmarks bar, mostly painted over */}
        <div className={`h-[66px] -mt-[2px] flex items-center pl-[28px] text-[20px] text-white ${AR} whitespace-nowrap`}>
          <div className="w-[30px] h-[28px] rounded-[3px] bg-[#a8a8ac]" />
          <span className="ml-[86px] text-[18px]">....'s |</span>
          <div className="ml-[56px] w-[30px] h-[28px] rounded-[3px] bg-[#a8a8ac]" />
          <span className="ml-[8px]">J</span>
          <div className="ml-[988px] w-[20px] h-[28px] bg-[#4aa0e8]" />
          <div className="ml-[200px] w-[28px] h-[28px] rounded-[4px] border-2 border-[#23262e]" />
          <span className="ml-[18px] text-[24px]">React kurssi</span>
          <div className="ml-[30px] w-[30px] h-[24px] bg-[#a8a8ac]" />
          <span className="ml-[84px]">s</span>
        </div>
        <svg className="absolute left-0 top-[-78px] pointer-events-none" width="2622" height="216" viewBox="108 50 2622 216">
          <path
            d="M151 227 C160 220 184 217 220 215 C266 213 285 222 303 227 L395 225 C420 222 430 215 450 213 C510 209 560 206 588 204 L597 217 L826 218 L863 215 L1102 217 L1125 208 L1166 217 L1267 208 L1440 213 L1440 222 L1532 217 L1578 207 C1620 202 1660 202 1700 204 L1807 210 L1927 217 L1943 223 L1927 233 L1826 237 L1715 227 L1559 235 L1532 243 L1440 248 L1267 248 L1249 238 L1139 240 L1107 248 L1084 240 L918 257 L826 248 L689 247 L459 242 L432 242 L422 233 L165 238 Z"
            fill="#6a6319"
            stroke="#6a6319"
            strokeWidth="4"
            strokeLinejoin="round"
          />
        </svg>
      </div>
    </>
  );
}

function Person() {
  return (
    <svg width="28" height="32" viewBox="0 0 28 32" fill="#000">
      <ellipse cx="14" cy="9" rx="8.5" ry="9" />
      <path d="M0 32 V26 C0 21 5 19 9 19 H19 C23 19 28 21 28 26 V32 Z" />
    </svg>
  );
}

const PEOPLE: [string, string, string][] = [
  ["651c42fa015a64c3ade84883", "Urho Kekkonen", "050-5005022"],
  ["651c442c015a64c3ade8488b", "Donald Duck", "09-13001300"],
  ["651c446d015a64c3ade84891", "Jack Sparrow", "040-1234567"],
  ["651ee99da61cff4ac12ffc4f", "Hector Barbossa", "06-9001001"],
  ["651eea52a61cff4ac12ffc54", "Elvis Presley", "0700-800100"],
  ["651eeb05a61cff4ac12ffc59", "Angelica Teach", "040-12340091"],
  ["652a9017109768b92928e531", "Mikko Mallikas", "040-999-9990"],
  ["653bf67f799944650db4652b", "Telia Inmics", "0400123123"],
];

function Card({ p }: { p: [string, string, string] }) {
  return (
    <div className="h-[259px] rounded-[11px] border-[2.5px] border-[#2a6f97] bg-[#9df8f2] pl-[20px] pt-[24px] shadow-[0_4px_8px_rgba(0,0,0,0.14)]">
      <Person />
      <div className="mt-[4px] text-[22.5px] leading-[28px]">ID: {p[0]}</div>
      <div className="text-[32px] leading-[38px] font-bold">Name: {p[1]}</div>
      <div className="text-[32.5px] leading-[38px]">Phonenumber: {p[2]}</div>
      <button className={`mt-[20px] block w-[119px] h-[51px] rounded-[10px] bg-[#ee6660] text-white text-[26.4px] font-bold ${AR}`}>Delete</button>
    </div>
  );
}

function Field({ value, focus }: { value: string; focus?: boolean }) {
  return (
    <input
      readOnly
      value={value}
      className={`h-[112px] bg-[#f7fdf6] border-t-4 border-b-8 border-x-0 border-t-[#222] border-b-[#c4bcf5] text-[35.2px] text-[#1d3a30] outline-none ${AR} ${focus ? "w-[392px] ml-[11px] pl-[9px] rounded-[4px] shadow-[0_0_0_2px_#a9a9a9,0_0_0_5px_#ffffff]" : "w-[394px] pl-[11px]"}`}
    />
  );
}

function Page() {
  return (
    <div className="flex-1 min-h-0 overflow-hidden bg-white px-[16px]">
      <div className={`h-full overflow-hidden bg-[#e7d7fa] pl-[66px] pr-[25px] pt-[20px] text-black ${VS}`}>
        <div className="h-[8px] bg-[#d0bff5]" />
        <div className="mt-[21px] text-[32px] leading-[40px]">Etsi puhelinluettelosta</div>
        <div className="mt-[3px] pl-[5px] flex"><Field value="" /></div>
        <div className="mt-[45px] text-[32px] leading-[40px]">Nimi ja puhelinnumero</div>
        <div className="mt-[3px] pl-[5px] flex">
          <Field value="Elvis Presley" />
          <Field value="0700-8003331" focus />
        </div>
        <button className={`mt-[29px] w-[138px] h-[119px] rounded-[20px] bg-[#7826dc] border-y-[20px] border-y-[#8f5bee] border-l-4 border-l-[#77757f] border-r-4 border-r-[#222] flex items-center justify-center gap-[4px] text-black text-[26.4px] font-bold ${AR}`}>
          Add
          <svg width="24" height="24" viewBox="0 0 24 24" stroke="#000" strokeWidth="5"><path d="M12 1 V23 M1 12 H23" /></svg>
        </button>
        <div className="mt-[20px] h-[8px] bg-[#d0bff5]" />
        <div className="mt-[20px] h-[278px] rounded-[16px] border-4 border-black bg-white pt-[45px]">
          <p className="pl-[13px] text-[32.2px] leading-[40px] whitespace-nowrap">
            Elvis Presley is already in the list. Do you want to update the information? Please give a new phone number and press YES if you want to change the
            <br />
            number.
          </p>
          <div className={`mt-[38px] pl-[20px] flex gap-[15px] text-white text-[26.4px] font-bold ${AR}`}>
            <button className="w-[102px] h-[86px] rounded-[24px] bg-[#461478] border-2 border-[#58107c]">Yes</button>
            <button className="w-[143px] h-[86px] rounded-[24px] bg-[#461478] border-2 border-[#58107c]">Cancel</button>
          </div>
        </div>
        <div className="mt-[20px] rounded-t-[16px] bg-[#d5fff6] pt-[47px] pb-[40px] h-[700px]">
          <h2 className="pl-[10px] text-[37.44px] leading-[48px] font-bold">Names and numbers</h2>
          <div className="mt-[35px] ml-[132px] grid grid-cols-[repeat(4,542px)] gap-x-[22px] gap-y-[21px]">
            {PEOPLE.map((p) => <Card key={p[0]} p={p} />)}
          </div>
        </div>
      </div>
    </div>
  );
}

export default function App() {
  return (
    <div className="relative w-[2880px] h-[1800px] overflow-hidden bg-[linear-gradient(to_right,transparent_50%,#0a0a0a_50%),linear-gradient(180deg,#3d1585_0%,#1c0a50_55%,#0a0420_100%)]">
      <Menubar />
      <BackWindows />
      <Dock />
      <div className="absolute left-[108px] top-[50px] w-[2622px] h-[1730px] rounded-t-[20px] rounded-b-[24px] overflow-hidden flex flex-col z-20 shadow-[0_0_0_1px_#111]">
        <BrowserChrome />
        <Page />
      </div>
    </div>
  );
}
